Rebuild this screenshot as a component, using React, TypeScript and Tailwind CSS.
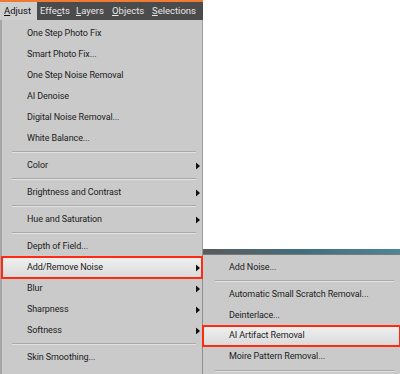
import React from "react";

type Item = { label: string; sub?: boolean; sep?: boolean; hl?: boolean };

const mainItems: Item[] = [
  { label: "One Step Photo Fix" },
  { label: "Smart Photo Fix..." },
  { label: "One Step Noise Removal" },
  { label: "AI Denoise" },
  { label: "Digital Noise Removal..." },
  { label: "White Balance..." },
  { label: "", sep: true },
  { label: "Color", sub: true },
  { label: "", sep: true },
  { label: "Brightness and Contrast", sub: true },
  { label: "", sep: true },
  { label: "Hue and Saturation", sub: true },
  { label: "", sep: true },
  { label: "Depth of Field..." },
  { label: "Add/Remove Noise", sub: true, hl: true },
  { label: "Blur", sub: true },
  { label: "Sharpness", sub: true },
  { label: "Softness", sub: true },
  { label: "", sep: true },
  { label: "Skin Smoothing..." },
];

const subItems: Item[] = [
  { label: "Add Noise..." },
  { label: "", sep: true },
  { label: "Automatic Small Scratch Removal..." },
  { label: "Deinterlace..." },
  { label: "AI Artifact Removal", hl: true },
  { label: "Moire Pattern Removal..." },
  { label: "", sep: true },
];

function Arrow() {
  return (
    <svg width="4" height="7" viewBox="0 0 4 7" className="absolute right-[2px] top-1/2 -translate-y-1/2">
      <path d="M0 0 L4 3.5 L0 7 Z" fill="#111" />
    </svg>
  );
}

function Row({ item, sepClass, padClass }: { item: Item; sepClass: string; padClass: string }) {
  if (item.sep) {
    return (
      <div className={`flex flex-col justify-center ${sepClass}`}>
        <div className="h-px bg-[#a9a9a9]" />
        <div className="h-px bg-[#e2e2e2]" />
      </div>
    );
  }
  return (
    <div
      className={`relative h-[21px] flex items-center ${padClass} text-[9px] tracking-[-0.1px] text-[#1c1c1c] whitespace-nowrap ${
        item.hl
          ? "bg-gradient-to-b from-[#f0f0f0] to-[#dadada] outline-2 outline-[#ff2a12] -outline-offset-1 z-10"
          : ""
      }`}
    >
      <span>{item.label}</span>
      {item.sub && <Arrow />}
    </div>
  );
}

export default function App() {
  return (
    <div
      className="relative w-[400px] h-[374px] bg-white overflow-hidden"
      style={{ fontFamily: 'Roboto, "Noto Sans", sans-serif' }}
    >
      {/* top menu bar */}
      <div className="w-[203px] flex flex-col">
        <div className="h-[2px] bg-[#ee7a34]" />
        <div className="h-[18px] bg-[#4b4b4b] flex items-stretch overflow-hidden whitespace-nowrap text-[9.5px] text-[#e6e6e6]">
          <div className="w-[37px] shrink-0 bg-[#cfcfcf] text-[#111] pl-[4px] flex items-center">
            <span>
              <span className="underline">A</span>djust
            </span>
          </div>
          <div className="flex items-center pl-[3px]">
            <span className="w-[36px] shrink-0">
              Effe<span className="underline">c</span>ts
            </span>
            <span className="w-[36px] shrink-0">
              <span className="underline">L</span>ayers
            </span>
            <span className="w-[40px] shrink-0">
              <span className="underline">O</span>bjects
            </span>
            <span className="shrink-0">
              <span className="underline">S</span>elections
            </span>
          </div>
        </div>
      </div>

      {/* main dropdown */}
      <div className="w-[203px] h-[354px] bg-[#cacaca] border-l-2 border-l-[#a6a6a6] border-r border-r-[#9c9c9c] pt-[3px] flex flex-col">
        {mainItems.map((it, i) => (
          <Row key={i} item={it} sepClass="h-[6px] ml-[10px] mr-[6px]" padClass="pl-[25px]" />
        ))}
      </div>

      {/* background image strip behind submenu */}
      <div className="absolute left-[203px] top-[249px] w-[197px] h-[5px] bg-gradient-to-r from-[#5a5a5a] via-[#3f6f7f] to-[#4f8596]" />

      {/* submenu */}
      <div className="absolute left-[202px] top-[254px] w-[198px] h-[120px] bg-[#cacaca] border-l border-l-[#8f8f8f] border-t border-t-[#7a7a7a] pt-[2px] flex flex-col">
        {subItems.map((it, i) => (
          <Row key={i} item={it} sepClass="h-[7px] ml-[12px] mr-[6px]" padClass="pl-[26px]" />
        ))}
      </div>
    </div>
  );
}
